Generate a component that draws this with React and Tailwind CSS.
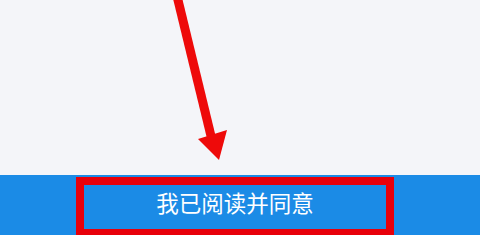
export default function App() {
    return (
        <div className="w-[480px] h-[235px] flex flex-col bg-[#f4f5f9] overflow-hidden">
            {/* annotation area */}
            <div className="relative flex-1">
                <svg className="absolute inset-0" width="480" height="175" viewBox="0 0 480 175">
                    <line x1="177" y1="-4" x2="211" y2="136" stroke="#ee0a0a" strokeWidth="9" />
                    <polygon points="198,139 227,130 219,160" fill="#ee0a0a" />
                </svg>
            </div>

            {/* bottom button bar */}
            <div className="h-[60px] bg-[#1b8be6] pt-[2px] pl-[76px]">
                <div className="w-[318px] h-[60px] border-[8px] border-[#e8000a] flex items-center justify-center pb-[10px]">
                    <span className="text-white text-[22.5px] leading-none font-['Noto_Sans_CJK_SC','Noto_Sans',sans-serif]">
                        我已阅读并同意
                    </span>
                </div>
            </div>
        </div>
    );
}
